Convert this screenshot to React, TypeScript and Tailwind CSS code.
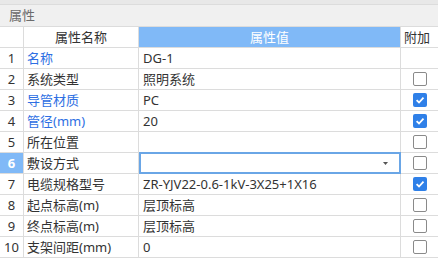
import React from 'react';

type Row = {
  name: string;
  value: string;
  blue?: boolean;
  check?: boolean | null;
  dropdown?: boolean;
};

const rows: Row[] = [
  { name: '名称', value: 'DG-1', blue: true, check: null },
  { name: '系统类型', value: '照明系统', check: false },
  { name: '导管材质', value: 'PC', blue: true, check: true },
  { name: '管径(mm)', value: '20', blue: true, check: true },
  { name: '所在位置', value: '', check: false },
  { name: '敷设方式', value: '', check: false, dropdown: true },
  { name: '电缆规格型号', value: 'ZR-YJV22-0.6-1kV-3X25+1X16', check: true },
  { name: '起点标高(m)', value: '层顶标高', check: false },
  { name: '终点标高(m)', value: '层顶标高', check: false },
  { name: '支架间距(mm)', value: '0', check: false },
];

function Checkbox({ checked }: { checked: boolean }) {
  if (checked) {
    return (
      <span className="flex h-[14px] w-[14px] items-center justify-center rounded-[2px] bg-[#2f80e8]">
        <svg width="10" height="10" viewBox="0 0 10 10">
          <path d="M1.6 5.2 L4 7.5 L8.5 2.6" fill="none" stroke="#fff" strokeWidth="1.8" />
        </svg>
      </span>
    );
  }
  return <span className="block h-[14px] w-[14px] rounded-[2px] border border-[#8a8a8a] bg-white" />;
}

export default function App() {
  return (
    <div
      className="h-[259px] w-[438px] overflow-hidden bg-white text-[13px] text-[#333]"
      style={{ fontFamily: '"Noto Sans", "Noto Sans CJK SC", sans-serif' }}
    >
      <div className="h-[5px] border-b border-[#dcdcdc] bg-[#e8e8e8]" />
      <div className="flex h-[22px] items-center border-b border-[#dcdcdc] bg-[#f0f0f0] pl-[9px] text-[#6b6b6b]">
        属性
      </div>

      <div className="flex h-[21px] border-b border-[#dcdcdc] leading-[20px]">
        <div className="w-[24px] border-r border-[#dcdcdc]" />
        <div className="w-[115px] border-r border-[#dcdcdc] text-center">属性名称</div>
        <div className="w-[261px] bg-[#80b9f7] text-center text-white">属性值</div>
        <div className="flex-1 border-l border-[#dcdcdc] pl-[3px]">附加</div>
      </div>

      {rows.map((r, i) => (
        <div key={i} className="flex h-[21px] border-b border-[#dcdcdc] leading-[20px]">
          <div
            className={
              r.dropdown
                ? 'w-[24px] border-r border-[#dcdcdc] bg-[#80b9f7] text-center font-bold text-white'
                : 'w-[24px] border-r border-[#dcdcdc] text-center'
            }
          >
            {i + 1}
          </div>
          <div
            className={
              r.blue
                ? 'w-[115px] border-r border-[#dcdcdc] pl-[3px] text-[#2e6fe3]'
                : 'w-[115px] border-r border-[#dcdcdc] pl-[3px]'
            }
          >
            {r.name}
          </div>
          <div className="relative w-[261px] pl-[4px]">
            {r.value}
            {r.dropdown && (
              <div className="absolute -bottom-[1px] left-0 -right-[1px] -top-[1px] flex items-center justify-end border-2 border-[#6aa6e6] pr-[11px]">
                <svg width="5" height="3" viewBox="0 0 5 3">
                  <path d="M0 0 H5 L2.5 3 Z" fill="#555" />
                </svg>
              </div>
            )}
          </div>
          <div className="flex flex-1 items-center justify-center border-l border-[#dcdcdc]">
            {r.check !== null && r.check !== undefined && <Checkbox checked={r.check} />}
          </div>
        </div>
      ))}
    </div>
  );
}
